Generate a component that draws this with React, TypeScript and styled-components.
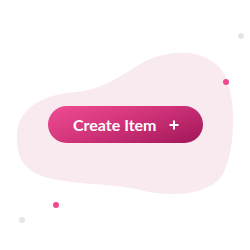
import styled, { createGlobalStyle } from "styled-components";

const GlobalStyle = createGlobalStyle`
  html, body {
    margin: 0;
    padding: 0;
    background: #ffffff;
  }
`;

const Stage = styled.div`
  position: relative;
  width: 250px;
  height: 250px;
  overflow: hidden;
  display: flex;
  align-items: flex-start;
  justify-content: center;
  padding-top: 106px;
  box-sizing: border-box;
  background: #ffffff;
`;

const Blob = styled.svg`
  position: absolute;
  left: 0;
  top: 0;
  width: 250px;
  height: 250px;
`;

const Dot = styled.span<{ $x: number; $y: number; $size: number; $color: string }>`
  position: absolute;
  left: ${(p) => p.$x - p.$size / 2}px;
  top: ${(p) => p.$y - p.$size / 2}px;
  width: ${(p) => p.$size}px;
  height: ${(p) => p.$size}px;
  border-radius: 50%;
  background: ${(p) => p.$color};
`;

const CreateButton = styled.button`
  position: relative;
  margin-left: 1px;
  display: flex;
  align-items: center;
  gap: 12px;
  width: 155px;
  height: 37px;
  padding: 0 0 0 25px;
  box-sizing: border-box;
  border: none;
  border-radius: 19px;
  background: linear-gradient(160deg, #f04d93 0%, #d2347a 45%, #a01658 100%);
  color: #ffffff;
  font-family: Lato, "Noto Sans", sans-serif;
  font-weight: 700;
  font-size: 16px;
  cursor: pointer;
`;

const PlusIcon = () => (
  <svg width="10" height="10" viewBox="0 0 10 10">
    <path d="M5 0.5V9.5M0.5 5H9.5" stroke="#ffffff" strokeWidth="2" />
  </svg>
);

export default function App() {
  return (
    <Stage>
      <GlobalStyle />
      <Blob viewBox="0 0 250 250">
        <path
          d="M17 140 C15 110 40 95 75 92 C100 90 115 80 140 64 C165 50 200 47 220 68 C238 88 236 150 223 174 C211 195 170 198 140 190 C110 182 60 186 35 173 C20 164 17 152 17 140 Z"
          fill="#f9eaf0"
        />
      </Blob>
      <Dot $x={226} $y={82} $size={6} $color="#f2468f" />
      <Dot $x={56} $y={205} $size={6} $color="#f2468f" />
      <Dot $x={241} $y={36} $size={6} $color="#e6e6e6" />
      <Dot $x={22} $y={220} $size={6} $color="#e6e6e6" />
      <CreateButton>
        Create Item
        <PlusIcon />
      </CreateButton>
    </Stage>
  );
}
